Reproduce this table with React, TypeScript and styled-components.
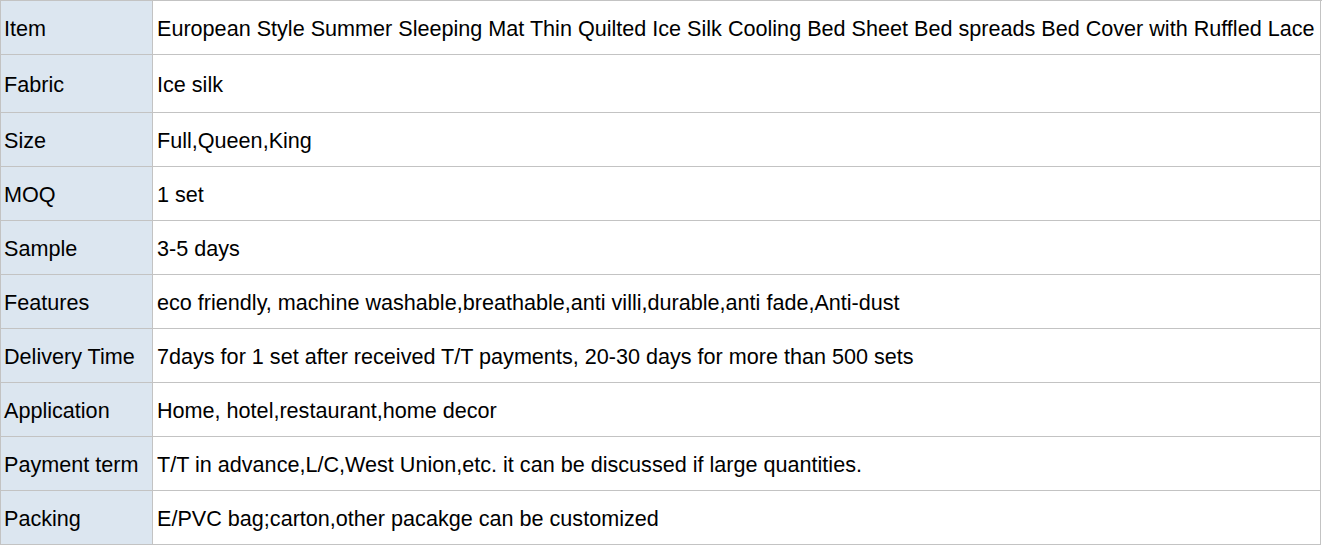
import React from "react";
import styled, { createGlobalStyle } from "styled-components";

const GlobalStyle = createGlobalStyle`
  html, body {
    margin: 0;
    padding: 0;
    background: #ffffff;
  }
`;

const rows: { label: string; value: string; tall?: boolean }[] = [
  {
    label: "Item",
    value:
      "European Style Summer Sleeping Mat Thin Quilted Ice Silk Cooling Bed Sheet Bed spreads Bed Cover with Ruffled Lace",
  },
  { label: "Fabric", value: "Ice silk", tall: true },
  { label: "Size", value: "Full,Queen,King" },
  { label: "MOQ", value: "1 set" },
  { label: "Sample", value: "3-5 days" },
  {
    label: "Features",
    value:
      "eco friendly, machine washable,breathable,anti villi,durable,anti fade,Anti-dust",
  },
  {
    label: "Delivery Time",
    value:
      "7days for 1 set after received T/T payments, 20-30 days for more than 500 sets",
  },
  { label: "Application", value: "Home, hotel,restaurant,home decor" },
  {
    label: "Payment term",
    value:
      "T/T in advance,L/C,West Union,etc. it can be discussed if large quantities.",
  },
  { label: "Packing", value: "E/PVC bag;carton,other pacakge can be customized" },
];

export default function App() {
  return (
    <>
      <GlobalStyle />
      <SpecTable>
        {rows.map((r) => (
          <React.Fragment key={r.label}>
            <LabelCell $tall={r.tall}>{r.label}</LabelCell>
            <ValueCell $tall={r.tall}>{r.value}</ValueCell>
          </React.Fragment>
        ))}
      </SpecTable>
    </>
  );
}

const SpecTable = styled.div`
  display: grid;
  grid-template-columns: 152px 1168px;
  width: 1322px;
  border-top: 1px solid #c3c3c3;
  border-left: 1px solid #c3c3c3;
  box-sizing: border-box;
  font-family: "Liberation Sans", Arial, sans-serif;
  font-size: 21.6px;
  color: #000000;
`;

const Cell = styled.div<{ $tall?: boolean }>`
  display: flex;
  align-items: center;
  height: ${(p) => (p.$tall ? 58 : 54)}px;
  box-sizing: border-box;
  padding: 3px 0 0 3px;
  border-right: 1px solid #c3c3c3;
  border-bottom: 1px solid #c3c3c3;
  white-space: nowrap;
  overflow: hidden;
`;

const LabelCell = styled(Cell)`
  background: #dce6f0;
`;

const ValueCell = styled(Cell)`
  background: #ffffff;
  padding-left: 4px;
`;
